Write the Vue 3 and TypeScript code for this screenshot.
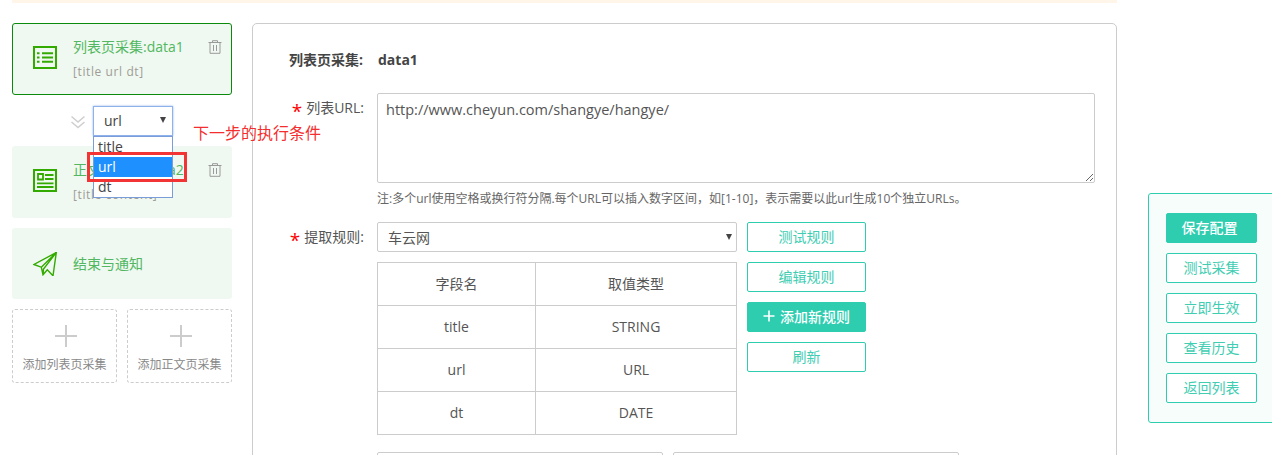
<script setup lang="ts">
const fields: [string, string][] = [
  ['title', 'STRING'],
  ['url', 'URL'],
  ['dt', 'DATE'],
]
const ruleButtons = ['测试规则', '编辑规则', '添加新规则', '刷新']
const sideButtons = ['保存配置', '测试采集', '立即生效', '查看历史', '返回列表']
const urlValue = 'http://www.cheyun.com/shangye/hangye/'
</script>

<template>
  <div class="page">
    <div class="topband"></div>
    <div class="layout">
      <aside class="steps">
        <div class="card active">
          <svg class="card-icon boxed" viewBox="0 0 24 23" width="24" height="23">
            <rect x="1" y="1" width="22" height="21" fill="none" stroke="#33aa00" stroke-width="2" />
            <path d="M4 7.200h2.500M9 7.200h11M4 11.500h2.500M9 11.500h11M4 15.800h2.500M9 15.800h11" stroke="#33aa00" stroke-width="2" fill="none" />
          </svg>
          <div class="card-text">
            <div class="card-title">列表页采集:data1</div>
            <div class="card-sub">[title url dt]</div>
          </div>
          <svg class="trash" viewBox="0 0 14 14" width="14" height="14">
            <path d="M0.500 2.500h13M4.500 2.500V0.700h5v1.800M2 2.500v10.800h10V2.500M5.500 5v6M8.500 5v6" fill="none" stroke="#9a9a9a" stroke-width="1" />
          </svg>
        </div>
        <div class="connector">
          <svg class="chev" viewBox="0 0 14 14" width="14" height="14">
            <path d="M0.500 1.500L7 7l6.500-5.500M0.500 7L7 12.500 13.500 7" fill="none" stroke="#cfcfcf" stroke-width="1.600" />
          </svg>
          <div class="cond-select">
            <span>url</span>
            <i class="arrow"></i>
          </div>
        </div>
        <div class="card">
          <svg class="card-icon boxed" viewBox="0 0 24 23" width="24" height="23">
            <rect x="1" y="1" width="22" height="21" fill="none" stroke="#33aa00" stroke-width="2" />
            <path d="M5 5h5v5.500H5zM12 6h8.500M12 10h8.500M4 14.300h16.500M4 18h16.500" stroke="#33aa00" stroke-width="1.800" fill="none" />
          </svg>
          <div class="card-text">
            <div class="card-title">正文页采集:data2</div>
            <div class="card-sub">[title content]</div>
          </div>
          <svg class="trash" viewBox="0 0 14 14" width="14" height="14">
            <path d="M0.500 2.500h13M4.500 2.500V0.700h5v1.800M2 2.500v10.800h10V2.500M5.500 5v6M8.500 5v6" fill="none" stroke="#9a9a9a" stroke-width="1" />
          </svg>
        </div>
        <div class="card end">
          <svg class="card-icon" viewBox="0 0 24 24" width="24" height="24">
            <path d="M23.300 0.500L1 12.500l7.300 2.700L10 22.800l4.300-5L20 23.800zM8.300 15.200L23.300 0.500 10.500 17 10 22.800" fill="none" stroke="#33aa00" stroke-width="1.400" stroke-linejoin="miter" />
          </svg>
          <div class="card-title">结束与通知</div>
        </div>
        <div class="adders">
          <div class="adder">
            <span class="plus"></span>
            <span>添加列表页采集</span>
          </div>
          <div class="adder">
            <span class="plus"></span>
            <span>添加正文页采集</span>
          </div>
        </div>

        <div class="options">
          <div class="option">title</div>
          <div class="option selected">url</div>
          <div class="option">dt</div>
        </div>
        <div class="highlight"></div>
        <div class="note">下一步的执行条件</div>
      </aside>

      <main class="panel">
        <div class="row head">
          <label class="label strong">列表页采集:</label>
          <strong class="value">data1</strong>
        </div>
        <div class="row url">
          <label class="label"><em>*</em>列表URL:</label>
          <div class="field">
            <textarea class="area" readonly :value="urlValue"></textarea>
            <p class="hint">注:多个url使用空格或换行符分隔.每个URL可以插入数字区间，如[1-10]，表示需要以此url生成10个独立URLs。</p>
          </div>
        </div>
        <div class="row rules">
          <label class="label"><em>*</em>提取规则:</label>
          <div class="rule-left">
            <div class="rule-select">
              <span>车云网</span>
              <i class="arrow"></i>
            </div>
            <table class="tbl">
              <tbody>
                <tr>
                  <td class="c1">字段名</td>
                  <td>取值类型</td>
                </tr>
                <tr v-for="f in fields" :key="f[0]">
                  <td class="c1">{{ f[0] }}</td>
                  <td>{{ f[1] }}</td>
                </tr>
              </tbody>
            </table>
          </div>
          <div class="rule-btns">
            <button
              v-for="b in ruleButtons"
              :key="b"
              class="btn"
              :class="{ solid: b === '添加新规则' }"
            >
              <svg v-if="b === '添加新规则'" class="btn-plus" viewBox="0 0 12 12" width="12" height="12">
                <path d="M6 0.500v11M0.500 6h11" stroke="#fff" stroke-width="1.600" fill="none" />
              </svg>{{ b }}
            </button>
          </div>
        </div>
        <div class="row bottom">
          <div class="bottom-input"></div>
          <div class="bottom-input"></div>
        </div>
      </main>

      <aside class="actions">
        <button
          v-for="(b, i) in sideButtons"
          :key="b"
          class="btn side"
          :class="{ solid: i === 0 }"
        >{{ b }}</button>
      </aside>
    </div>
  </div>
</template>

<style scoped>
.page {
  width: 1272px;
  height: 455px;
  overflow: hidden;
  background: #fff;
  font-family: "Open Sans", "Noto Sans CJK SC", sans-serif;
  font-size: 14px;
  color: #555;
}
.topband {
  width: 1105px;
  height: 3px;
  margin-left: 12px;
  background: #fff6e9;
}
.layout {
  display: flex;
  align-items: flex-start;
  padding: 20px 0 0 12px;
}
.steps {
  position: relative;
  flex: none;
  width: 220px;
  display: flex;
  flex-direction: column;
}
.card {
  height: 72px;
  box-sizing: border-box;
  display: flex;
  align-items: center;
  position: relative;
  padding-left: 21px;
  background: #eff9f1;
  border-radius: 3px;
  color: #52b760;
}
.card.active {
  border: 1px solid #0b8a0b;
  padding-left: 20px;
}
.card.end {
  height: 71px;
  margin-top: 10px;
}
.card-icon {
  flex: none;
  margin-right: 16px;
}
.card-icon.boxed {
  margin-top: -3px;
}
.card-text {
  display: flex;
  flex-direction: column;
  gap: 7px;
  margin-top: -1px;
}
.card-title {
  font-size: 14px;
  line-height: 20px;
  color: #52b760;
}
.card-sub {
  font-size: 12px;
  line-height: 16px;
  color: #a09c96;
  letter-spacing: 0.6px;
}
.trash {
  position: absolute;
  right: 10px;
  top: 17px;
}
.card.active .trash {
  right: 9px;
  top: 16px;
}
.connector {
  height: 50px;
  display: flex;
  align-items: center;
  padding: 0 0 0 59px;
  margin-top: 1px;
}
.chev {
  margin-right: 8px;
  margin-top: 1px;
}
.cond-select {
  width: 80px;
  height: 30px;
  box-sizing: border-box;
  border: 1px solid #8fb2ec;
  box-shadow: 0 0 2px #8fb2ec;
  background: #fff;
  display: flex;
  align-items: center;
  justify-content: space-between;
  padding: 0 6px 2px 10px;
  color: #444;
}
.arrow {
  display: block;
  width: 0;
  height: 0;
  border-left: 3.5px solid transparent;
  border-right: 3.5px solid transparent;
  border-top: 6px solid #444;
}
.adders {
  display: flex;
  justify-content: space-between;
  margin-top: 10px;
}
.adder {
  width: 105px;
  height: 74px;
  box-sizing: border-box;
  border: 1px dashed #ccc;
  border-radius: 3px;
  display: flex;
  flex-direction: column;
  align-items: center;
  font-size: 12px;
  color: #888;
  padding-top: 15px;
}
.plus {
  display: block;
  width: 22px;
  height: 22px;
  margin-bottom: 8px;
  margin-left: 2px;
  background:
    linear-gradient(#ccc, #ccc) center / 22px 2px no-repeat,
    linear-gradient(#ccc, #ccc) center / 2px 22px no-repeat;
}
.options {
  position: absolute;
  left: 81px;
  top: 113px;
  width: 80px;
  box-sizing: border-box;
  border: 1px solid #7a9cd8;
  background: #fff;
  z-index: 2;
}
.option {
  height: 20px;
  line-height: 20px;
  padding-left: 4px;
  font-size: 14px;
  color: #444;
}
.option.selected {
  background: #1e90ff;
  color: #fff;
}
.highlight {
  position: absolute;
  left: 75px;
  top: 129px;
  width: 100px;
  height: 30px;
  box-sizing: border-box;
  border: 3px solid #f33434;
  z-index: 3;
}
.note {
  position: absolute;
  left: 181px;
  top: 99px;
  width: 140px;
  font-size: 16px;
  line-height: 22px;
  color: #f42e2e;
  z-index: 3;
  white-space: nowrap;
}
.panel {
  flex: none;
  width: 865px;
  height: 520px;
  box-sizing: border-box;
  margin-left: 20px;
  border: 1px solid #ccc;
  border-radius: 5px;
  padding-top: 26px;
}
.row {
  display: flex;
  align-items: flex-start;
}
.label {
  flex: none;
  width: 111px;
  margin-right: 13px;
  text-align: right;
  line-height: 20px;
  font-size: 14px;
  color: #555;
}
.label em {
  font-style: normal;
  color: #f00;
  font-size: 19px;
  line-height: 20px;
  margin-right: 4px;
  vertical-align: -5px;
}
.label.strong {
  width: 110px;
  margin-right: 14px;
}
.label.strong,
.value {
  font-weight: 700;
  color: #444;
}
.value {
  line-height: 20px;
  margin-left: 1px;
}
.url {
  margin-top: 23px;
}
.url .label {
  padding-top: 5px;
}
.area {
  display: block;
  width: 718px;
  height: 90px;
  box-sizing: border-box;
  border: 1px solid #ccc;
  border-radius: 2px;
  padding: 6px 8px;
  margin: 0;
  font: inherit;
  font-size: 14.5px;
  line-height: 20px;
  color: #555;
  outline: none;
}
.hint {
  margin: 8px 0 0;
  font-size: 12px;
  line-height: 16px;
  color: #666;
}
.rules {
  margin-top: 15px;
}
.rules .label {
  line-height: 30px;
}
.rule-left {
  flex: none;
  width: 360px;
}
.rule-select {
  height: 30px;
  box-sizing: border-box;
  border: 1px solid #ccc;
  border-radius: 2px;
  display: flex;
  align-items: center;
  justify-content: space-between;
  padding: 0 4px 0 10px;
  color: #555;
}
.tbl {
  width: 360px;
  margin-top: 10px;
  border-collapse: collapse;
  table-layout: fixed;
}
.tbl td {
  height: 40px;
  box-sizing: content-box;
  padding: 0 0 2px;
  border: 1px solid #ccc;
  text-align: center;
  color: #555;
}
.tbl .c1 {
  width: 157px;
}
.rule-btns {
  flex: none;
  margin-left: 10px;
  display: flex;
  flex-direction: column;
  gap: 10px;
}
.btn {
  display: flex;
  align-items: center;
  justify-content: center;
  width: 119px;
  height: 30px;
  box-sizing: border-box;
  padding: 0 0 2px;
  background: #fff;
  border: 1px solid #2ecdb0;
  border-radius: 2px;
  font: inherit;
  font-size: 14px;
  color: #41cdb2;
}
.btn.solid {
  background: #2ecdb0;
  color: #fff;
  font-weight: 500;
}
.btn.side.solid {
  padding-right: 4px;
}
.btn-plus {
  margin-right: 5px;
}
.bottom {
  margin-top: 17px;
  margin-left: 124px;
  gap: 10px;
}
.bottom-input {
  width: 286px;
  height: 30px;
  box-sizing: border-box;
  border: 1px solid #ccc;
  border-radius: 2px;
}
.actions {
  flex: none;
  box-sizing: border-box;
  width: 130px;
  height: 230px;
  margin-top: 170px;
  margin-left: 31px;
  padding: 19px 0 0 17px;
  display: flex;
  flex-direction: column;
  gap: 10px;
  background: #f6fdfa;
  border: 1px solid #2ecdb0;
  border-radius: 3px;
}
.btn.side {
  width: 91px;
}
</style>

<style>
html, body { margin: 0; overflow: hidden; background: #fff; }
</style>
